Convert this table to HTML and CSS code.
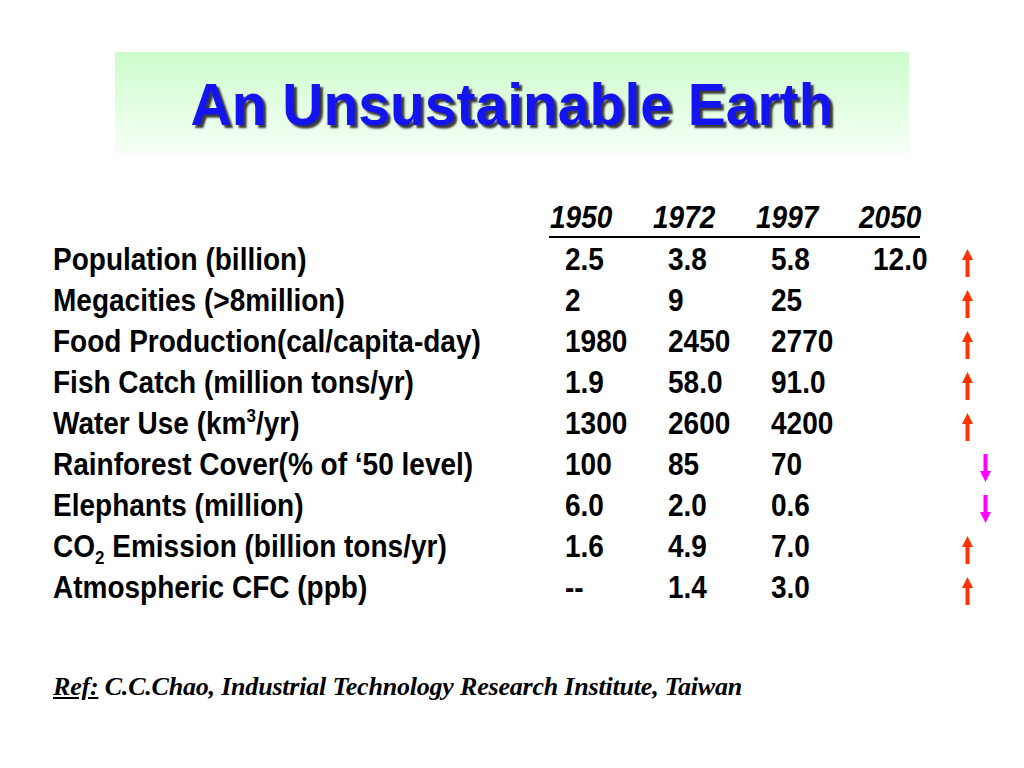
FILE: index.html
```html
<!DOCTYPE html>
<html>
<head>
<meta charset="utf-8">
<link rel="stylesheet" href="styles.css">
</head>
<body>
<div class="slide">
  <div class="title-box"><h1 class="title">An Unsustainable Earth</h1></div>
  <div class="years">
    <span class="year">1950</span><span class="year">1972</span><span class="year">1997</span><span class="year last">2050</span>
  </div>
  <div class="table">
    <div class="row"><span class="label">Population (billion)</span><span class="val">2.5</span><span class="val">3.8</span><span class="val">5.8</span><span class="val">12.0</span><span class="arrow-cell"><svg class="arrow up" viewBox="0 0 11 28"><polygon points="0,11 5.5,0 11,11"/><rect x="3.5" y="10" width="4" height="18"/></svg></span></div>
    <div class="row"><span class="label">Megacities (&gt;8million)</span><span class="val">2</span><span class="val">9</span><span class="val">25</span><span class="val"></span><span class="arrow-cell"><svg class="arrow up" viewBox="0 0 11 28"><polygon points="0,11 5.5,0 11,11"/><rect x="3.5" y="10" width="4" height="18"/></svg></span></div>
    <div class="row"><span class="label">Food Production(cal/capita-day)</span><span class="val">1980</span><span class="val">2450</span><span class="val">2770</span><span class="val"></span><span class="arrow-cell"><svg class="arrow up" viewBox="0 0 11 28"><polygon points="0,11 5.5,0 11,11"/><rect x="3.5" y="10" width="4" height="18"/></svg></span></div>
    <div class="row"><span class="label">Fish Catch (million tons/yr)</span><span class="val">1.9</span><span class="val">58.0</span><span class="val">91.0</span><span class="val"></span><span class="arrow-cell"><svg class="arrow up" viewBox="0 0 11 28"><polygon points="0,11 5.5,0 11,11"/><rect x="3.5" y="10" width="4" height="18"/></svg></span></div>
    <div class="row"><span class="label">Water Use (km<sup>3</sup>/yr)</span><span class="val">1300</span><span class="val">2600</span><span class="val">4200</span><span class="val"></span><span class="arrow-cell"><svg class="arrow up" viewBox="0 0 11 28"><polygon points="0,11 5.5,0 11,11"/><rect x="3.5" y="10" width="4" height="18"/></svg></span></div>
    <div class="row"><span class="label">Rainforest Cover(% of ‘50 level)</span><span class="val">100</span><span class="val">85</span><span class="val">70</span><span class="val"></span><span class="arrow-cell"><svg class="arrow down" viewBox="0 0 11 28"><rect x="3.5" y="0" width="4" height="18"/><polygon points="0,17 5.5,28 11,17"/></svg></span></div>
    <div class="row"><span class="label">Elephants (million)</span><span class="val">6.0</span><span class="val">2.0</span><span class="val">0.6</span><span class="val"></span><span class="arrow-cell"><svg class="arrow down" viewBox="0 0 11 28"><rect x="3.5" y="0" width="4" height="18"/><polygon points="0,17 5.5,28 11,17"/></svg></span></div>
    <div class="row"><span class="label">CO<sub>2</sub> Emission (billion tons/yr)</span><span class="val">1.6</span><span class="val">4.9</span><span class="val">7.0</span><span class="val"></span><span class="arrow-cell"><svg class="arrow up" viewBox="0 0 11 28"><polygon points="0,11 5.5,0 11,11"/><rect x="3.5" y="10" width="4" height="18"/></svg></span></div>
    <div class="row"><span class="label">Atmospheric CFC (ppb)</span><span class="val">--</span><span class="val">1.4</span><span class="val">3.0</span><span class="val"></span><span class="arrow-cell"><svg class="arrow up" viewBox="0 0 11 28"><polygon points="0,11 5.5,0 11,11"/><rect x="3.5" y="10" width="4" height="18"/></svg></span></div>
  </div>
  <p class="ref"><span class="ref-label">Ref:</span> C.C.Chao, Industrial Technology Research Institute, Taiwan</p>
</div>
</body>
</html>
```
FILE: styles.css
```css
html, body {
  margin: 0;
  padding: 0;
  background: #ffffff;
}
.slide {
  width: 1024px;
  height: 768px;
  padding-top: 52px;
  box-sizing: border-box;
  font-family: "Liberation Sans", Arial, sans-serif;
  color: #000;
}
.title-box {
  margin-left: 115px;
  width: 794px;
  height: 101px;
  background: linear-gradient(#ccfccc, #f6fff6);
  display: flex;
  align-items: center;
  justify-content: center;
}
.title {
  margin: 0;
  font-size: 57px;
  font-weight: bold;
  color: #1414f0;
  text-shadow: 3px 3px 2px #3a3a3a;
  line-height: 1;
  transform: translateY(2px) scaleY(1.05);
}
.years {
  margin-top: 47px;
  margin-left: 549px;
  width: 371px;
  height: 36px;
  line-height: 36px;
  border-bottom: 2px solid #000;
  display: flex;
  font-size: 28px;
  font-weight: bold;
  font-style: italic;
}
.year {
  display: block;
  width: 103px;
  padding-left: 1px;
  box-sizing: border-box;
  transform: scaleY(1.1);
}
.year.last {
  width: 62px;
}
.table {
  margin-top: 1px;
}
.row {
  display: grid;
  grid-template-columns: 512px 103px 103px 102px 89px 1fr;
  padding-left: 53px;
  height: 41px;
  line-height: 41px;
  font-size: 28px;
  font-weight: bold;
}
.label, .val {
  transform: scaleY(1.1);
}
.row sup {
  font-size: 17px;
  line-height: 0;
  vertical-align: 11px;
}
.row sub {
  font-size: 17px;
  line-height: 0;
  vertical-align: -6px;
}
.arrow-cell {
  display: flex;
  align-items: flex-end;
  padding-bottom: 3px;
}
.arrow {
  width: 11px;
  height: 28px;
  display: block;
}
.arrow.up {
  fill: #ff3300;
}
.arrow.down {
  fill: #ff00ff;
  margin-left: 18px;
}
.ref {
  margin: 64px 0 0 53px;
  font-family: "Liberation Serif", "Times New Roman", serif;
  font-size: 26px;
  line-height: 30px;
  font-weight: bold;
  font-style: italic;
  letter-spacing: -0.2px;
}
.ref-label {
  text-decoration: underline;
}
```
